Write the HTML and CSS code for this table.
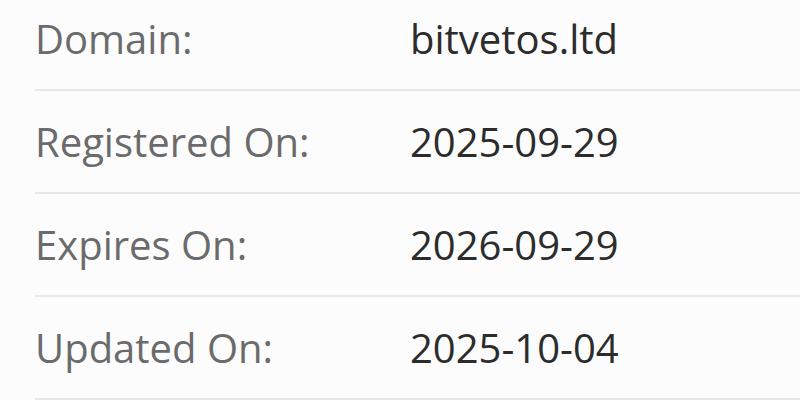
FILE: index.html
```html
<!DOCTYPE html>
<html lang="en">
<head>
<meta charset="utf-8">
<title>Domain info</title>
<link rel="stylesheet" href="styles.css">
</head>
<body>
<div class="info">
  <div class="row"><div class="label">Domain:</div><div class="value">bitvetos.ltd</div></div>
  <div class="row"><div class="label">Registered On:</div><div class="value">2025-09-29</div></div>
  <div class="row"><div class="label">Expires On:</div><div class="value">2026-09-29</div></div>
  <div class="row"><div class="label">Updated On:</div><div class="value">2025-10-04</div></div>
</div>
</body>
</html>
```
FILE: styles.css
```css
html, body {
  margin: 0;
  padding: 0;
  background: #fcfcfc;
  overflow: hidden;
}
.info {
  margin: -12px 0 0 35px;
  font-family: "Open Sans", sans-serif;
  font-size: 40px;
  line-height: normal;
}
.row {
  display: grid;
  grid-template-columns: 375px 1fr;
  padding: 23px 0;
  border-bottom: 2px solid #e8e8e8;
  height: 55px;
  align-items: start;
}
.label {
  color: #6b6b6b;
}
.value {
  color: #2c2c2c;
}
```
